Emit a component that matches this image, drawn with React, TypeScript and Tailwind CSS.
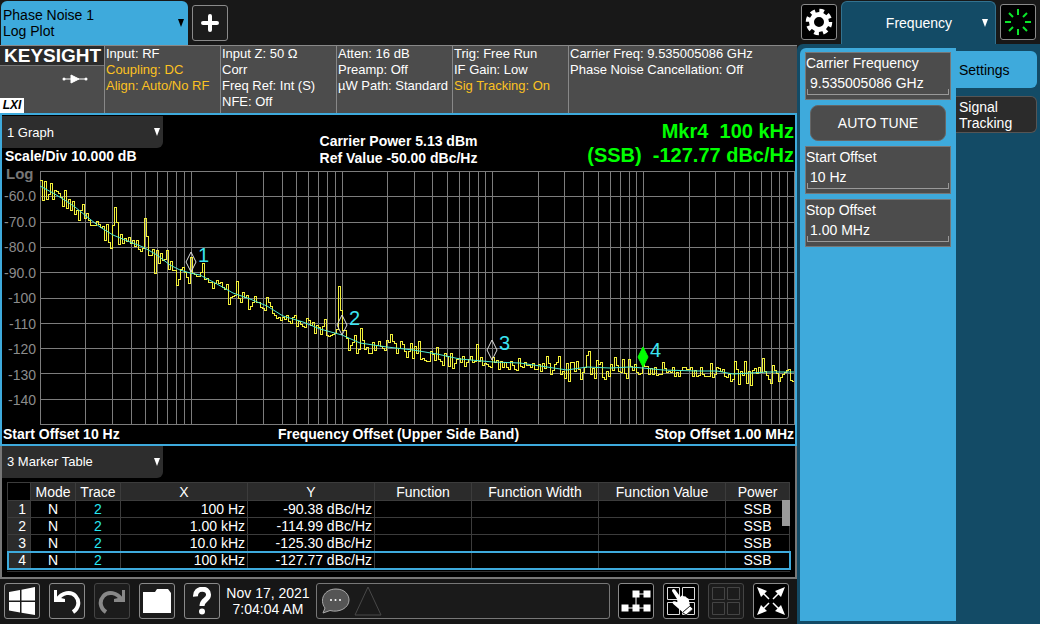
import type { ReactNode } from 'react'

const PLOT = { left: 40, right: 794, top: 171, bottom: 424 }
const DECADE = 150.8

const smooth = [
  [40, 186], [53, 193], [63, 199], [75, 207], [86, 216], [100, 227], [113, 235], [130, 242], [143, 247],
  [157, 255], [170, 265], [180, 270], [190, 273], [200, 275], [217, 284], [233, 293], [250, 299], [267, 306],
  [283, 316], [303, 322], [320, 329], [342, 335], [360, 343], [387, 347], [413, 350], [437, 354], [460, 359],
  [493, 362], [520, 363], [547, 367], [567, 370], [587, 367], [610, 368], [630, 367], [643, 368], [663, 370],
  [697, 371], [717, 371], [733, 374], [750, 373], [767, 372], [794, 372],
]

const spikes: Record<number, number> = {
  40: 180, 42: 200, 44: 181, 46: 199, 48: 194, 50: 183, 52: 199, 62: 206, 64: 190, 74: 214, 78: 220, 82: 204,
  104: 240, 106: 224, 108: 242, 110: 248, 112: 225, 114: 207, 116: 222, 118: 244, 144: 218, 146: 236,
  154: 273, 158: 263, 166: 250, 176: 285, 178: 279, 188: 283, 190: 257, 202: 263, 228: 304, 236: 281,
  248: 309, 266: 297, 324: 319, 338: 286, 340: 310, 342: 330, 348: 350, 356: 353, 360: 328, 370: 353,
  390: 334, 412: 358, 418: 341, 424: 360, 452: 368, 476: 344, 490: 367, 516: 370, 546: 356, 558: 356,
  564: 378, 568: 381, 586: 355, 588: 351, 604: 379, 614: 357, 628: 359, 662: 362, 710: 363, 730: 381,
  734: 361, 744: 361, 750: 385, 762: 358, 770: 383,
}

function smoothAt(x: number) {
  let i = 1
  while (i < smooth.length - 1 && smooth[i][0] < x) i++
  const [x0, y0] = smooth[i - 1]
  const [x1, y1] = smooth[i]
  return y0 + ((y1 - y0) * (x - x0)) / (x1 - x0)
}

function spreadAt(x: number) {
  if (x < 340) return 6
  if (x < 460) return 9
  if (x < 540) return 6
  if (x < 640) return 10
  return x < 730 ? 5 : 9
}

function buildTrace() {
  let seed = 90217
  let d = ''
  for (let x = PLOT.left; x < PLOT.right; x += 2) {
    seed = (seed * 16807) % 2147483647
    const n = (seed / 2147483647 - 0.5) * 2
    const y = spikes[x] ?? Math.round(smoothAt(x) + 1 + n * spreadAt(x))
    d += d ? `V${y}H${x + 2}` : `M${x} ${y}H${x + 2}`
  }
  return d
}

const trace = buildTrace()

const verticals: number[] = []
for (let dec = 0; dec < 5; dec++) {
  for (let k = 1; k < 10; k++) verticals.push(Math.round(PLOT.left + DECADE * (dec + Math.log10(k))))
}
const horizontals = Array.from({ length: 11 }, (_, i) => Math.round(PLOT.top + i * 25.3))
const yLabels = ['-60.0', '-70.0', '-80.0', '-90.0', '-100', '-110', '-120', '-130', '-140']

const markers = [
  { id: 1, x: 191, y: 262, filled: false },
  { id: 2, x: 342, y: 325, filled: false },
  { id: 3, x: 492, y: 350, filled: false },
  { id: 4, x: 643, y: 357, filled: true },
]

const rows = [
  ['1', 'N', '2', '100 Hz', '-90.38 dBc/Hz'],
  ['2', 'N', '2', '1.00 kHz', '-114.99 dBc/Hz'],
  ['3', 'N', '2', '10.0 kHz', '-125.30 dBc/Hz'],
  ['4', 'N', '2', '100 kHz', '-127.77 dBc/Hz'],
]

const headers = ['', 'Mode', 'Trace', 'X', 'Y', 'Function', 'Function Width', 'Function Value', 'Power']

function IconButton({ label, dim, dark, children }: { label: string; dim?: boolean; dark?: boolean; children: ReactNode }) {
  return (
    <button
      type="button"
      aria-label={label}
      className={`flex size-9 shrink-0 items-center justify-center rounded-[3px] border ${dim ? 'border-[#444]' : 'border-[#8a8a8a]'} ${dark ? 'bg-black' : 'bg-[#1c1c1c]'}`}
    >
      {children}
    </button>
  )
}

function ViewSelect({ label }: { label: string }) {
  return (
    <div className="relative h-8 w-[161px] rounded-br-md bg-[#2d2d2d]">
      <select aria-label="View" className="h-full w-full appearance-none bg-transparent pl-[5px] text-[13px] text-white">
        <option>{label}</option>
      </select>
      <svg viewBox="0 0 6 8" className="pointer-events-none absolute top-3 right-[3px] h-2 w-1.5" fill="#fff">
        <path d="M0 0h6L3 8z" />
      </svg>
    </div>
  )
}

function Field({ id, label, value }: { id: string; label: string; value: string }) {
  return (
    <div className="h-12 border border-[#777] bg-[#4c4c4c]">
      <label htmlFor={id} className="block text-sm leading-5">{label}</label>
      <input id={id} defaultValue={value} className="block h-5 w-full bg-transparent px-1 text-sm outline-none" />
      <div className="mx-px -mt-1 h-1.5 border-x border-b border-[#999]" />
    </div>
  )
}

function Plot() {
  return (
    <svg viewBox="2 166 793 260" className="block w-full overflow-visible" role="img" aria-label="Phase noise log plot">
      <g stroke="#7c7c7c" shapeRendering="crispEdges">
        {verticals.map((x) => <path key={x} d={`M${x}.5 ${PLOT.top}V${PLOT.bottom}`} />)}
        {horizontals.map((y) => <path key={y} d={`M${PLOT.left} ${y}.5H795`} />)}
        <path d={`M794.5 ${PLOT.top}V${PLOT.bottom}`} />
      </g>
      <g fill="#8c8c8c" fontSize="14" textAnchor="end">
        {yLabels.map((t, i) => <text key={t} x="36" y={201 + Math.round(i * 25.5)}>{t}</text>)}
      </g>
      <text x="6" y="179" fill="#777" fontSize="15" fontWeight="bold">Log</text>
      <path d={trace} fill="none" stroke="#f2f03a" shapeRendering="crispEdges" />
      <polyline points={smooth.map((p) => p.join(',')).join(' ')} fill="none" stroke="#4fe8d0" />
      {markers.map((m) => (
        <g key={m.id}>
          <path
            d={`M${m.x} ${m.y - 10}l5 10l-5 10l-5 -10z`}
            fill={m.filled ? '#00ff00' : 'none'}
            stroke={m.filled ? '#00ff00' : '#ddd'}
          />
          <text x={m.x + 7} y={m.y} fill="#3be4f2" fontSize="20">{m.id}</text>
        </g>
      ))}
    </svg>
  )
}

function StatusBar() {
  return (
    <div className="flex h-[68px] border-t border-[#888] bg-[#4c4c4c] text-[13px] leading-4 text-white">
      <div className="flex w-[104px] shrink-0 flex-col">
        <div className="h-5 border-b border-[#777] bg-[#2b2b2b] pl-1 text-[19px] leading-5 font-bold">KEYSIGHT</div>
        <svg viewBox="0 0 26 10" className="mt-2 ml-[62px] h-2.5 w-[26px]" fill="#fff" stroke="#fff">
          <path d="M2 5h22" />
          <path d="M9 1l8 4l-8 4z" />
          <circle cx="2" cy="5" r="1.5" stroke="none" />
          <circle cx="24" cy="5" r="1.5" stroke="none" />
        </svg>
        <div className="mt-auto w-6 bg-white text-center text-xs leading-[15px] font-bold text-black italic">LXI</div>
      </div>
      <div className="w-[116px] shrink-0 border-l border-[#888] pl-px">
        <p>Input: RF</p>
        <p className="text-[#fcc221]">Coupling: DC</p>
        <p className="text-[#fcc221]">Align: Auto/No RF</p>
      </div>
      <div className="w-[116px] shrink-0 border-l border-[#888] pl-px">
        <p>Input Z: 50 Ω</p>
        <p>Corr</p>
        <p>Freq Ref: Int (S)</p>
        <p>NFE: Off</p>
      </div>
      <div className="w-[116px] shrink-0 border-l border-[#888] pl-px">
        <p>Atten: 16 dB</p>
        <p>Preamp: Off</p>
        <p>µW Path: Standard</p>
      </div>
      <div className="w-[116px] shrink-0 border-l border-[#888] pl-px">
        <p>Trig: Free Run</p>
        <p>IF Gain: Low</p>
        <p className="text-[#fcc221]">Sig Tracking: On</p>
      </div>
      <div className="flex-1 border-l border-[#888] pl-px">
        <p>Carrier Freq: 9.535005086 GHz</p>
        <p>Phase Noise Cancellation: Off</p>
      </div>
    </div>
  )
}

function MarkerTable() {
  return (
    <section className="border-x-2 border-b-2 border-[#777] bg-black pb-[5px]">
      <ViewSelect label="3 Marker Table" />
      <div className="relative mx-[5px] mt-1 border-b border-[#333] pb-0.5">
        <table className="w-full table-fixed border-collapse text-sm leading-4 text-white">
          <colgroup>
            <col className="w-[23px]" />
            <col className="w-[45px]" />
            <col className="w-[45px]" />
            <col className="w-[127px]" />
            <col className="w-[127px]" />
            <col className="w-[97px]" />
            <col className="w-[127px]" />
            <col className="w-[127px]" />
            <col />
          </colgroup>
          <thead>
            <tr className="h-[18px]">
              {headers.map((h, i) => (
                <th key={i} className={`border border-[#3c3c3c] p-0 font-normal ${i ? 'bg-[#2b2b2b]' : 'bg-black'}`}>{h}</th>
              ))}
            </tr>
          </thead>
          <tbody>
            {rows.map((r, i) => (
              <tr key={r[0]} className={`h-[17px] ${i === 3 ? 'outline-2 -outline-offset-1 outline-[#3eaadc]' : ''}`}>
                <td className="border border-[#3c3c3c] bg-[#2b2b2b] p-0 pr-1 text-right">{r[0]}</td>
                <td className="border border-[#3c3c3c] p-0 text-center">{r[1]}</td>
                <td className="border border-[#3c3c3c] p-0 text-center text-[#28e8f0]">{r[2]}</td>
                <td className="border border-[#3c3c3c] p-0 pr-0.5 text-right">{r[3]}</td>
                <td className="border border-[#3c3c3c] p-0 pr-0.5 text-right">{r[4]}</td>
                <td className="border border-[#3c3c3c] p-0" />
                <td className="border border-[#3c3c3c] p-0" />
                <td className="border border-[#3c3c3c] p-0" />
                <td className="border border-[#3c3c3c] p-0 text-center">SSB</td>
              </tr>
            ))}
          </tbody>
        </table>
        <div className="absolute top-[18px] right-0 h-[26px] w-2 bg-[#9a9a9a]" />
      </div>
    </section>
  )
}

function Toolbar() {
  return (
    <footer className="flex flex-1 items-start justify-between gap-1 bg-[#161616] pt-1 pr-2 pl-1">
      <div className="flex shrink-0 gap-[9px]">
        <IconButton label="Windows">
          <svg viewBox="0 0 26 28" className="h-7 w-[26px]" fill="#fff">
            <path d="M0 5l11 -2v10.500H0zM12.500 2.700L26 0v13.500H12.500zM0 15h11v10.500l-11 -2zM12.500 15H26v13l-13.500 -2.300z" />
          </svg>
        </IconButton>
        <IconButton label="Undo">
          <svg viewBox="0 0 28 26" className="h-[26px] w-7">
            <path d="M1 2h3v7l8 2v3H1z" fill="#fff" />
            <path d="M4 12C9 4 18 3 22.500 8C27 13 26 20 20 24" fill="none" stroke="#fff" strokeWidth="4" />
          </svg>
        </IconButton>
        <IconButton label="Redo" dim>
          <svg viewBox="0 0 28 26" className="h-[26px] w-7">
            <path d="M27 2h-3v7l-8 2v3h11z" fill="#888" />
            <path d="M24 12C19 4 10 3 5.500 8C1 13 2 20 8 24" fill="none" stroke="#888" strokeWidth="4" />
          </svg>
        </IconButton>
        <IconButton label="Files">
          <svg viewBox="0 0 28 24" className="h-6 w-7" fill="#fff">
            <path d="M0 3h12l2 -3h11l3 4v20H0z" />
          </svg>
        </IconButton>
        <IconButton label="Help">
          <svg viewBox="0 0 20 28" className="h-7 w-5">
            <path d="M3.500 9.500C3 0 17 0 16.500 8C16.500 13 10 12.500 10 19" fill="none" stroke="#fff" strokeWidth="5" />
            <circle cx="10" cy="24.500" r="3" fill="#fff" />
          </svg>
        </IconButton>
      </div>
      <p className="w-[88px] shrink-0 pt-0.5 text-center text-sm leading-4 whitespace-nowrap text-white">
        Nov 17, 2021<br />7:04:04 AM
      </p>
      <div className="mr-1 flex h-9 min-w-0 flex-1 items-center gap-1 rounded-[3px] border border-[#777] bg-[#1a1a1a] pl-1">
        <svg viewBox="0 0 29 26" className="h-[26px] w-[29px]">
          <path d="M4 20C-2 12 3 1 15 1C24 1 28 7 28 12C28 20 18 25 9 22.500L2 25z" fill="#555" stroke="#aaa" />
          <g fill="#fff">
            <circle cx="10" cy="12" r="1" />
            <circle cx="14.500" cy="12" r="1" />
            <circle cx="19" cy="12" r="1" />
          </g>
        </svg>
        <svg viewBox="0 0 28 30" className="h-[30px] w-7" fill="none" stroke="#484848">
          <path d="M14 1l13 28H1z" />
        </svg>
      </div>
      <div className="flex shrink-0 gap-[9px]">
        <IconButton label="Block diagram" dark>
          <svg viewBox="0 0 30 30" className="size-[30px]" fill="#fff">
            <path d="M15 8h11M15 8v14M4 22h22" fill="none" stroke="#fff" />
            <path d="M11.500 4.500h7v7h-7zM22.500 4.500h7v7h-7zM0.500 18.500h7v7h-7zM11.500 18.500h7v7h-7zM22.500 18.500h7v7h-7z" />
          </svg>
        </IconButton>
        <IconButton label="Touch" dark>
          <svg viewBox="0 0 30 30" className="size-[30px]" fill="none" stroke="#ddd">
            <path d="M1.500 1.500h12v12h-12zM16.500 1.500h12v12h-12zM1.500 16.500h12v12h-12zM16.500 16.500h12v12h-12z" />
            <path
              d="M6 5Q6 2 9 3.500L14.500 11Q15.500 8.500 18 10.500Q19.500 9.500 21 12Q23 12 23 15L24 20L16.500 26L9 19.500Q5.500 17 7 15.500Q8.500 14.500 11.500 16.500L11 13z"
              fill="#fff"
              stroke="none"
            />
            <path d="M16.500 26.500l7.500 -6.500l3 3l-7 6z" fill="#fff" stroke="#333" />
          </svg>
        </IconButton>
        <IconButton label="Layout" dim>
          <svg viewBox="0 0 30 30" className="size-[30px]" fill="none" stroke="#444">
            <path d="M1.500 1.500h12v12h-12zM16.500 1.500h12v12h-12zM1.500 16.500h12v12h-12zM16.500 16.500h12v12h-12z" />
          </svg>
        </IconButton>
        <IconButton label="Full screen" dark>
          <svg viewBox="0 0 30 30" className="size-[30px]" fill="#fff" stroke="#fff">
            <path d="M5 5l8 8M25 5l-8 8M5 25l8 -8M25 25l-8 -8" strokeWidth="1.500" />
            <path d="M1 1l10 4l-6 6zM29 1l-10 4l6 6zM1 29l10 -4l-6 -6zM29 29l-10 -4l6 -6z" stroke="none" />
          </svg>
        </IconButton>
      </div>
    </footer>
  )
}

export default function App() {
  return (
    <div className="flex min-h-screen bg-[#181818] font-['Liberation_Sans',Arial,sans-serif] text-white">
      <main className="flex min-w-0 flex-1 flex-col">
        <div className="flex h-[45px] items-start gap-1 pl-px">
          <button type="button" className="mt-px flex h-11 w-[187px] items-center justify-between rounded-t-md bg-[#3eaadc] pr-1 pl-0.5 text-left text-sm leading-4 text-black">
            <span>Phase Noise 1<br />Log Plot</span>
            <svg viewBox="0 0 6 8" className="h-2 w-1.5"><path d="M0 0h6L3 8z" /></svg>
          </button>
          <div className="mt-[5px]">
            <IconButton label="Add screen">
              <svg viewBox="0 0 18 18" className="size-[18px]" stroke="#fff" strokeWidth="4" strokeLinecap="round">
                <path d="M9 2v14M2 9h14" />
              </svg>
            </IconButton>
          </div>
        </div>
        <StatusBar />
        <section className="border-2 border-[#3eaadc] bg-black">
          <div className="grid h-[51px] grid-cols-[1fr_auto_1fr] pt-px text-sm leading-[17px] font-bold">
            <div>
              <div className="font-normal"><ViewSelect label="1 Graph" /></div>
              <p className="pl-[3px]">Scale/Div 10.000 dB</p>
            </div>
            <p className="self-end text-center">Carrier Power 5.13 dBm<br />Ref Value -50.00 dBc/Hz</p>
            <p className="pt-[3px] pr-px text-right text-xl leading-6 whitespace-pre text-[#00ff00]">{'Mkr4  100 kHz\n(SSB)  -127.77 dBc/Hz'}</p>
          </div>
          <Plot />
          <div className="grid h-[18px] grid-cols-[1fr_auto_1fr] px-px text-sm leading-[17px] font-bold">
            <p>Start Offset 10 Hz</p>
            <p>Frequency Offset (Upper Side Band)</p>
            <p className="text-right">Stop Offset 1.00 MHz</p>
          </div>
        </section>
        <MarkerTable />
        <Toolbar />
      </main>

      <aside className="flex w-[243px] shrink-0 flex-col">
        <div className="flex h-11 items-start gap-1 pr-1 pl-1">
          <div className="mt-1">
            <IconButton label="System settings" dark>
              <svg viewBox="0 0 28 28" className="size-7" fill="none" stroke="#fff">
                <circle cx="14" cy="14" r="7.500" strokeWidth="5" />
                <circle cx="14" cy="14" r="11" strokeWidth="4.500" strokeDasharray="4.600 4.040" />
              </svg>
            </IconButton>
          </div>
          <button type="button" className="mt-px flex h-[43px] flex-1 items-center justify-end gap-[30px] rounded-t-md border-x border-t border-[#33728f] bg-[#134b66] pr-[7px] text-sm">
            Frequency
            <svg viewBox="0 0 6 8" className="h-2 w-1.5" fill="#fff"><path d="M0 0h6L3 8z" /></svg>
          </button>
          <div className="mt-1">
            <IconButton label="Sweep status" dark>
              <svg viewBox="0 0 28 28" className="size-7" stroke="#0be52b" strokeWidth="2">
                <path d="M14 1v6M14 21v6M1 14h6M21 14h6M5 5l4 4M19 19l4 4M5 23l4 -4M19 9l4 -4" />
              </svg>
            </IconButton>
          </div>
        </div>
        <div className="flex flex-1 rounded-tl-md bg-[#134b66] pt-1 pr-[3px] pb-[3px] pl-[3px]">
          <div className="flex w-[156px] flex-col gap-[5px] rounded-tl-md bg-[#3eaadc] px-[5px] pt-1">
            <Field id="carrier" label="Carrier Frequency" value="9.535005086 GHz" />
            <button type="button" className="mx-[5px] h-9 rounded-lg border border-[#666] bg-[#4c4c4c] text-sm">AUTO TUNE</button>
            <Field id="start" label="Start Offset" value="10 Hz" />
            <Field id="stop" label="Stop Offset" value="1.00 MHz" />
          </div>
          <nav className="flex flex-1 flex-col gap-2 pt-[3px] text-sm leading-4">
            <button type="button" className="h-[37px] rounded-r-md bg-[#3eaadc] pl-[3px] text-left text-black">Settings</button>
            <button type="button" className="h-[37px] rounded-r-md border border-l-0 border-[#555] bg-[#2b2b2b] pl-[3px] text-left">Signal<br />Tracking</button>
          </nav>
        </div>
      </aside>
    </div>
  )
}
